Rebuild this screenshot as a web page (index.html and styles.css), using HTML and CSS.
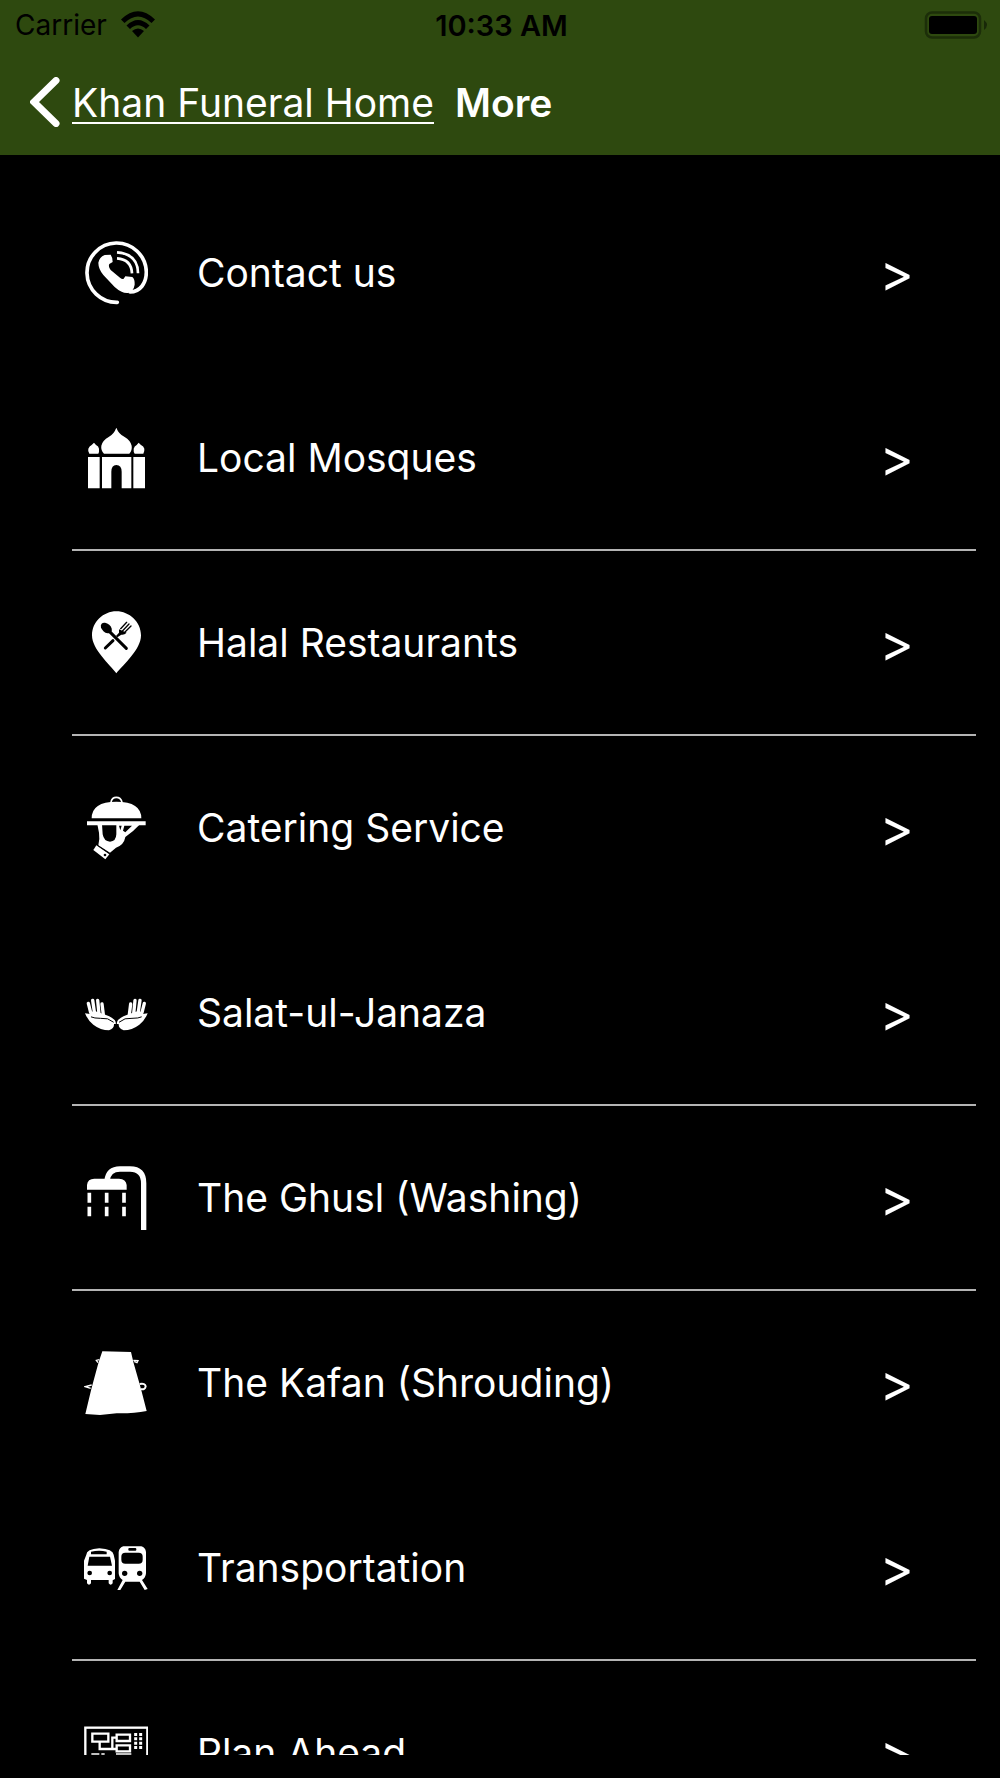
FILE: index.html
```html
<!DOCTYPE html>
<html lang="en">
<head>
<meta charset="utf-8">
<meta name="viewport" content="width=device-width, initial-scale=1">
<title>More</title>
<link rel="stylesheet" href="styles.css">
</head>
<body>
<div class="screen">
  <header class="header">
    <div class="status">
      <div class="carrier">
        <span>Carrier</span>
        <svg class="wifi" viewBox="0 0 34 28" aria-hidden="true">
          <path d="M0 8.500Q17-8 34 8.500L30.500 12Q17-1 3.500 12Z"/>
          <path d="M5.500 14.500Q17 3.500 28.500 14.500L25 18Q17 10.500 9 18Z"/>
          <path d="M11 20Q17 15 23 20L17 26.500Z"/>
        </svg>
      </div>
      <time class="clock">10:33 AM</time>
      <svg class="battery" viewBox="0 0 64 28" aria-hidden="true">
        <rect x="2" y="1.500" width="54" height="25" rx="6" fill="none" stroke="#1c2e09" stroke-width="2.500"/>
        <rect x="5" y="5" width="48" height="18" rx="3"/>
        <path d="M60 9Q66 14 60 19Z" fill="#182808"/>
      </svg>
    </div>
    <nav class="nav">
      <a class="back" href="#home">
        <svg class="chevron" viewBox="0 0 30 50" aria-hidden="true"><path d="M26 3.500L4 25L26 46.500"/></svg>
        <span class="back-label">Khan Funeral Home</span>
      </a>
      <h1 class="title">More</h1>
    </nav>
  </header>
  <main class="content">
    <ul class="menu">
      <li class="item"><a class="row" href="#contact">
        <svg class="icon" viewBox="42 43 192 192" aria-hidden="true">
          <path class="line" stroke-width="11" stroke-linecap="round" d="M142 227A89 89 0 1 1 229 136C229 170 210 196 180 196"/>
          <path d="M104 85L122 84Q128 92 128 106L118 112Q114 120 122 130L150 153Q157 159 161 156L166 149L187 151Q195 158 194 174Q190 197 173 199Q155 200 134 181L100 145Q85 126 85 108Q88 92 104 85Z"/>
          <path class="line" stroke-width="8" d="M141 77Q204 82 204 140M141 95Q184 98 186 140"/>
        </svg>
        <span class="label">Contact us</span><span class="arrow">&gt;</span></a></li>
      <li class="item ruled"><a class="row" href="#mosques">
        <svg class="icon" viewBox="42 29 192 192" aria-hidden="true">
          <path d="M102 112Q92 102 94 88Q98 72 116 62Q132 53 139 34Q146 53 164 62Q181 72 185 88Q187 102 178 112ZM58 112Q53 104 55 97Q58 89 65 86L72 79L78 86Q86 90 87 97Q88 106 85 112ZM194 112Q190 106 191 97Q193 90 200 86L206 79L213 86Q221 90 223 97Q224 105 220 112Z"/>
          <path d="M54 122H89V216H54ZM190 122H225V216H190ZM96 122H184V216H155V166Q155 147 139 146Q124 147 124 166V216H96Z"/>
        </svg>
        <span class="label">Local Mosques</span><span class="arrow">&gt;</span></a></li>
      <li class="item ruled"><a class="row" href="#restaurants">
        <svg class="icon" viewBox="42 29 192 192" aria-hidden="true">
          <path d="M139 216C120 190 66 145 66 102C66 62 100 30 139 30S213 62 213 102C213 145 160 190 139 216Z"/>
          <ellipse class="cut" cx="109" cy="80" rx="19" ry="13" transform="rotate(42 109 80)"/>
          <path class="cutline" stroke-width="9" d="M118 90L169 141M106 140L129 118"/>
          <path class="cutline" stroke-width="4" d="M152 82L170 63M158 88L177 68M165 92L183 74"/>
          <path class="cut" d="M147 84L170 94Q162 102 154 100L142 108L138 104L147 94Z"/>
        </svg>
        <span class="label">Halal Restaurants</span><span class="arrow">&gt;</span></a></li>
      <li class="item"><a class="row" href="#catering">
        <svg class="icon" viewBox="42 45 192 192" aria-hidden="true">
          <path class="line" stroke-width="5" d="M123 63Q126 49 139 49Q152 49 156 63"/>
          <path d="M65 112Q65 62 139 62Q214 62 214 112ZM51 121H227V133H51Z"/>
          <path d="M82 130H96L98 160Q102 182 120 182Q138 182 139 160V130H210Q190 152 166 168Q162 192 138 200L120 215L85 193Q90 176 87 155Z"/>
          <path class="cut" d="M147 134L151 148L155 134ZM163 134L159 149L166 154L186 134Z"/>
          <path d="M79 193L118 220L106 235L70 207Z"/>
          <path class="cutline" stroke-width="2" d="M84 194L116 216"/><circle class="cut" cx="105" cy="222" r="4"/>
        </svg>
        <span class="label">Catering Service</span><span class="arrow">&gt;</span></a></li>
      <li class="item ruled"><a class="row" href="#janaza">
        <svg class="icon" viewBox="42 31 192 192" aria-hidden="true">
          <g id="hand">
            <path class="line" stroke-width="10" stroke-linecap="round" d="M55 98L62 126M68 89L74 130M83 89L87 130M96 100L100 132"/>
            <path d="M45 128L60 130Q62 119 82 123L108 133Q122 137 134 148Q139 156 137 160H132Q133 174 117 179Q92 179 70 162Q54 150 45 128Z"/>
            <path class="cutline" stroke-width="3" d="M64 139Q72 143 92 143Q114 140 130 154"/>
          </g>
          <use href="#hand" transform="matrix(-1 0 0 1 278 0)"/>
        </svg>
        <span class="label">Salat-ul-Janaza</span><span class="arrow">&gt;</span></a></li>
      <li class="item ruled"><a class="row" href="#ghusl">
        <svg class="icon" viewBox="42 46 192 192" aria-hidden="true">
          <path d="M51 117V103Q53 84 73 84H147Q168 85 170 103V117Z"/>
          <path class="line" stroke-width="16" d="M111 90Q115 55 150 55H180Q221 55 221 98V238"/>
          <path class="line" stroke-width="11" d="M58 126V156M110 126V156M162 126V156M58 168V197M110 168V197M162 168V197"/>
        </svg>
        <span class="label">The Ghusl (Washing)</span><span class="arrow">&gt;</span></a></li>
      <li class="item"><a class="row" href="#kafan">
        <svg class="icon" viewBox="42 47 192 192" aria-hidden="true">
          <path d="M97 48L183 50L190 80L212 157L230 227Q190 235 140 234L90 239L46 236L64 161L86 80Z"/>
          <path class="line" stroke-width="4" d="M88 73L79 75L84 82M190 75L204 76L201 82L192 78M65 149L46 154L62 159"/>
          <path class="line" stroke-width="6" d="M209 146Q226 143 227 153Q225 164 213 161"/>
        </svg>
        <span class="label">The Kafan (Shrouding)</span><span class="arrow">&gt;</span></a></li>
      <li class="item ruled"><a class="row" href="#transportation">
        <svg class="icon" viewBox="42 18 192 192" aria-hidden="true">
          <path d="M49 74Q49 58 88 55Q129 58 131 74L135 92V147L128 151V160Q122 168 116 160V150H63V160Q57 168 51 160V150L42 146V92Z"/>
          <path class="cut" d="M63 65Q88 60 110 65V73H63ZM58 80H120L126 107H53Z"/>
          <circle class="cut" cx="59" cy="129" r="7"/><circle class="cut" cx="119" cy="129" r="7"/>
          <path d="M160 49H214Q226 52 228 66V130Q227 144 216 150L233 177L224 180L209 155H166L151 180H142L158 150Q147 144 146 130V66Q148 52 160 49Z"/>
          <rect class="cut" x="175" y="54" width="24" height="8" rx="3"/><rect class="cut" x="154" y="68" width="64" height="33" rx="12"/>
          <circle class="cut" cx="164" cy="130" r="8"/><circle class="cut" cx="209" cy="130" r="8"/>
        </svg>
        <span class="label">Transportation</span><span class="arrow">&gt;</span></a></li>
      <li class="item"><a class="row" href="#plan">
        <svg class="icon" viewBox="72 213 192 192" aria-hidden="true">
          <rect class="line" stroke-width="7" x="76" y="233" width="186" height="144"/>
          <path class="line" stroke-width="7" d="M97 251H145V275H97ZM119 277V297H170M170 254H210V273H170ZM170 286H210V304H170ZM170 263H157V297"/>
          <path class="line" stroke-width="9" stroke-dasharray="9 4" d="M227 249V297M242 249V297"/>
          <path class="line" stroke-width="4" d="M94 312H118M124 312H134M168 312H214"/>
        </svg>
        <span class="label">Plan Ahead</span><span class="arrow">&gt;</span></a></li>
    </ul>
  </main>
</div>
</body>
</html>
```
FILE: styles.css
```css
* { box-sizing: border-box; }
body {
  margin: 0;
  background: #000;
  color: #fff;
  font-family: Inter, "Liberation Sans", sans-serif;
  font-size: 39px;
}
a { color: inherit; text-decoration: none; }
svg { display: block; flex: none; }
.screen {
  display: flex;
  flex-direction: column;
  height: 100vh;
  padding-bottom: 23px;
}
.header { flex: none; background: #2e490f; padding-bottom: 15px; }
.status {
  display: grid;
  grid-template-columns: 1fr auto 1fr;
  align-items: center;
  height: 50px;
  padding: 0 12px 0 15px;
  color: #000;
  font-size: 28px;
}
.carrier { display: flex; align-items: center; gap: 14px; }
.wifi { width: 34px; height: 28px; }
.clock { font-size: 29px; font-weight: 600; }
.battery { width: 64px; height: 28px; justify-self: end; }
.nav {
  display: flex;
  align-items: center;
  gap: 21px;
  height: 90px;
  padding: 14px 30px 0;
}
.back { display: flex; align-items: center; gap: 12px; }
.chevron { width: 30px; height: 50px; }
.chevron path { fill: none; stroke: #fff; stroke-width: 7; stroke-linecap: round; }
.back-label {
  text-decoration: underline;
  text-decoration-thickness: 2px;
  text-underline-offset: 5px;
}
.title { margin: 0; font-size: 39px; font-weight: 600; }
.content { flex: 1; min-height: 0; overflow: hidden; padding: 26px 24px 0 72px; }
.menu { margin: 0; padding: 0; list-style: none; }
.item { height: 185px; border-bottom: 2px solid transparent; }
.ruled { border-color: #b4b4b4; }
.row {
  display: flex;
  align-items: center;
  gap: 49px;
  height: 100%;
  padding: 0 62px 0 12px;
}
.icon { width: 64px; height: 64px; fill: #fff; }
.line { fill: none; stroke: #fff; }
.cut { fill: #000; }
.cutline { fill: none; stroke: #000; stroke-linecap: round; }
.label { flex: 1; }
.arrow { font-size: 52px; line-height: 1; }
```
